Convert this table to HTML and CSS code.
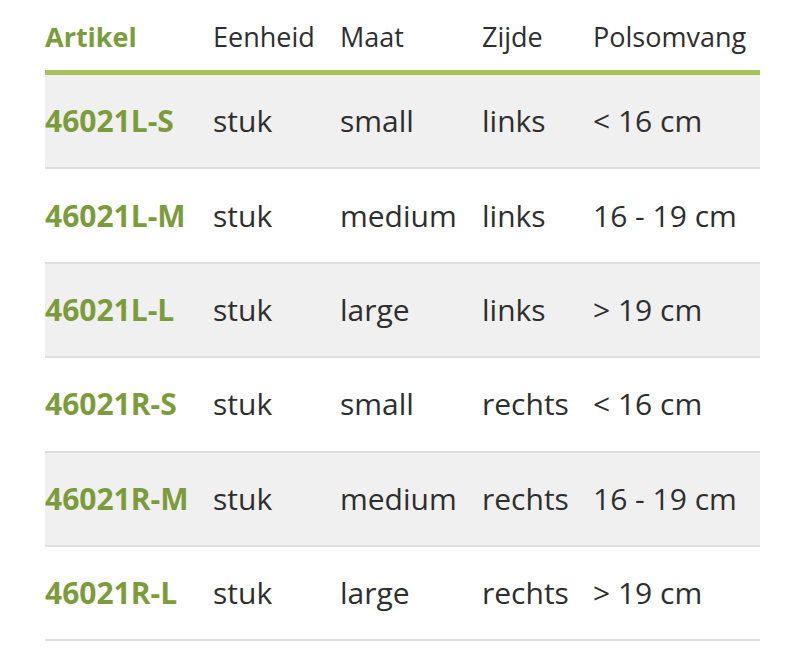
FILE: index.html
```html
<!DOCTYPE html>
<html lang="nl">
<head>
<meta charset="utf-8">
<title>Artikelen</title>
<link rel="stylesheet" href="styles.css">
</head>
<body>
<table class="specs">
  <colgroup>
    <col class="c1"><col class="c2"><col class="c3"><col class="c4"><col class="c5">
  </colgroup>
  <thead>
    <tr>
      <th class="art">Artikel</th>
      <th>Eenheid</th>
      <th>Maat</th>
      <th>Zijde</th>
      <th>Polsomvang</th>
    </tr>
  </thead>
  <tbody>
    <tr class="odd"><td class="art">46021L-S</td><td>stuk</td><td>small</td><td>links</td><td>&lt; 16 cm</td></tr>
    <tr><td class="art">46021L-M</td><td>stuk</td><td>medium</td><td>links</td><td>16 - 19 cm</td></tr>
    <tr class="odd"><td class="art">46021L-L</td><td>stuk</td><td>large</td><td>links</td><td>&gt; 19 cm</td></tr>
    <tr><td class="art">46021R-S</td><td>stuk</td><td>small</td><td>rechts</td><td>&lt; 16 cm</td></tr>
    <tr class="odd"><td class="art">46021R-M</td><td>stuk</td><td>medium</td><td>rechts</td><td>16 - 19 cm</td></tr>
    <tr><td class="art">46021R-L</td><td>stuk</td><td>large</td><td>rechts</td><td>&gt; 19 cm</td></tr>
  </tbody>
</table>
</body>
</html>
```
FILE: styles.css
```css
html, body {
  margin: 0;
  padding: 0;
  background: #ffffff;
}
body {
  font-family: "Open Sans", "Liberation Sans", sans-serif;
  color: #2e2e2e;
}
.specs {
  margin-left: 45px;
  width: 715px;
  table-layout: fixed;
  border-collapse: separate;
  border-spacing: 0;
}
.c1 { width: 168px; }
.c2 { width: 127px; }
.c3 { width: 142px; }
.c4 { width: 111px; }
.c5 { width: 167px; }
.specs th {
  font-size: 27px;
  font-weight: 400;
  line-height: 37px;
  text-align: left;
  padding: 18px 0 15px 0;
  border-bottom: 5px solid #a2c45a;
  white-space: nowrap;
}
.specs td {
  font-size: 30px;
  line-height: 40px;
  height: 92.4px;
  padding: 0;
  vertical-align: middle;
  border-bottom: 2px solid #dedede;
  white-space: nowrap;
}
.specs tr.odd td {
  background: #f0f0f0;
}
.specs .art {
  color: #7c9c3c;
  font-weight: 700;
}
```
